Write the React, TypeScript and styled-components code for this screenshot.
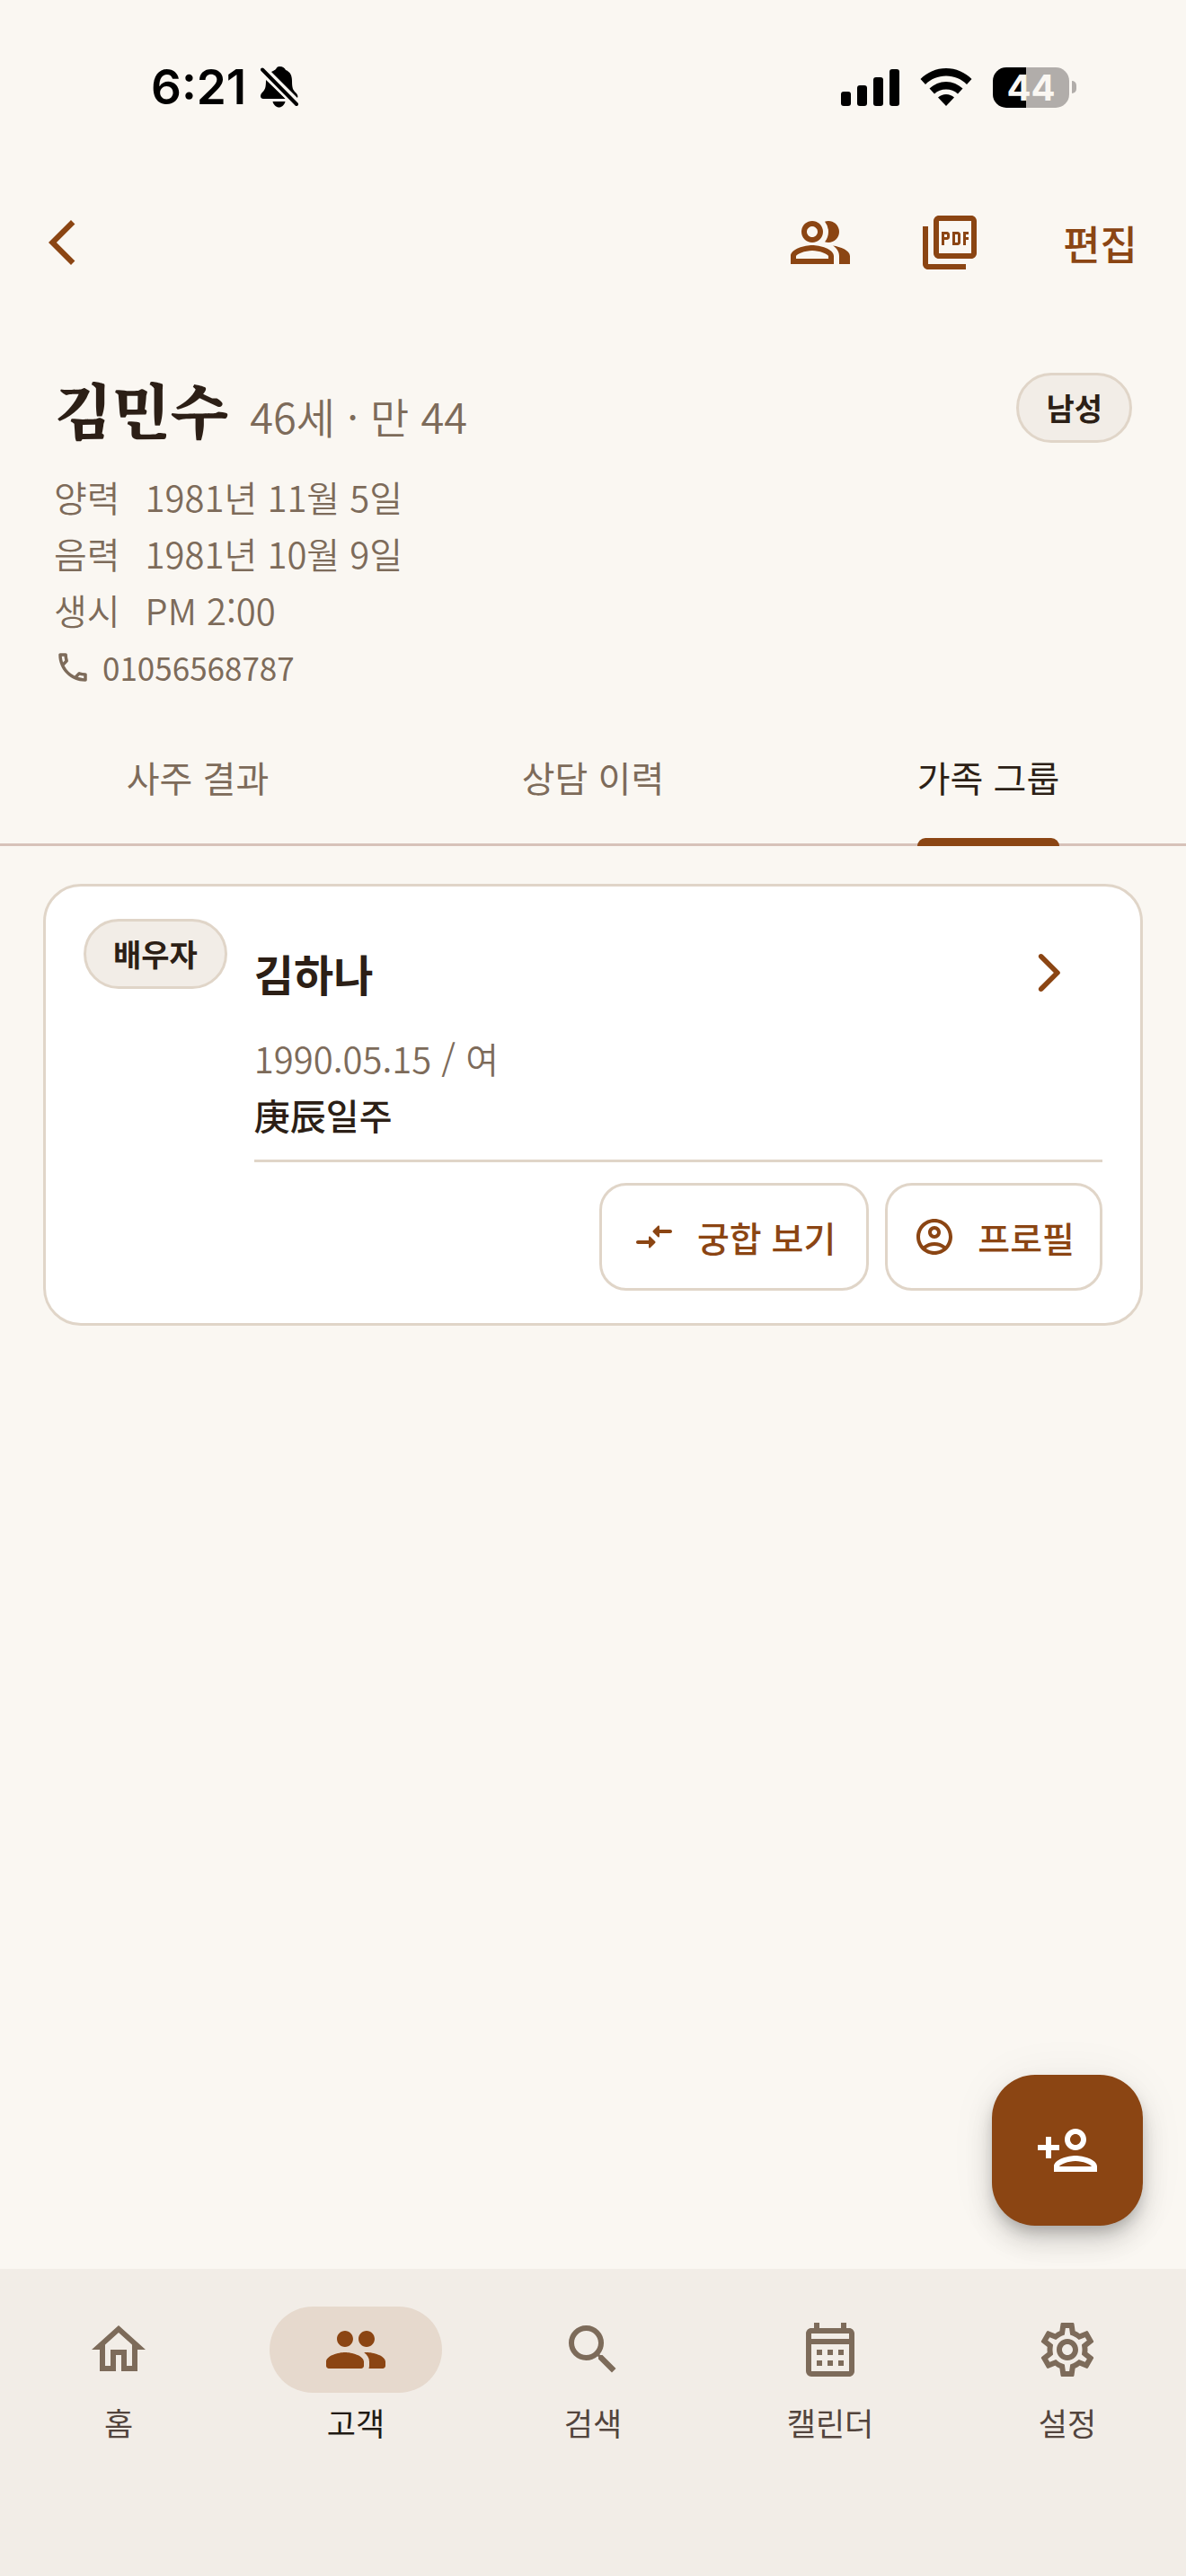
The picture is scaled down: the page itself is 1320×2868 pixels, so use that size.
import React, { useState } from 'react';
import styled, { createGlobalStyle } from 'styled-components';
import {
  MdArrowBackIosNew,
  MdOutlineAccountCircle,
  MdOutlineCalendarMonth,
  MdOutlineCall,
  MdOutlineHome,
  MdOutlinePeopleAlt,
  MdOutlinePersonAdd,
  MdOutlinePictureAsPdf,
  MdOutlineSettings,
  MdSearch,
} from 'react-icons/md';

const color = {
  page: '#faf7f2',
  surface: '#ffffff',
  soft: '#f2ede7',
  pill: '#e6d9cd',
  line: '#e0d5c8',
  tabLine: '#d7c2b9',
  brand: '#8b4513',
  ink: '#2c1f16',
  muted: '#7d6b5a',
  navText: '#52443d',
  navActive: '#211a14',
};

const sans = "'Noto Sans CJK KR', 'Noto Sans', sans-serif";

const GlobalStyle = createGlobalStyle`
  *, *::before, *::after { box-sizing: border-box; }
  body { margin: 0; background: ${color.page}; }
  button { font: inherit; color: inherit; background: none; border: 0; padding: 0; cursor: pointer; }
  h1, h2, p, dl, dt, dd { margin: 0; font-weight: inherit; font-size: inherit; }
  a { color: inherit; text-decoration: none; }
  svg { display: block; flex: none; }
`;

const Screen = styled.div`
  display: flex;
  flex-direction: column;
  min-height: 100vh;
  background: ${color.page};
  color: ${color.ink};
  font-family: ${sans};
  font-size: 40px;
  line-height: 63px;
`;

/* ---------- status bar ---------- */

const StatusBar = styled.div`
  display: flex;
  align-items: center;
  justify-content: space-between;
  height: 186px;
  padding: 8px 122px 0 168px;
  color: #000;
`;

const StatusGroup = styled.div<{ $gap: number }>`
  display: flex;
  align-items: center;
  gap: ${(p) => p.$gap}px;
`;

const Clock = styled.span`
  font-family: Inter, sans-serif;
  font-weight: 600;
  font-size: 53px;
`;

const Battery = styled.div`
  display: flex;
  align-items: center;
  gap: 3px;
`;

const BatteryBody = styled.div<{ $level: number }>`
  width: 85px;
  height: 45px;
  border-radius: 15px;
  background: linear-gradient(90deg, #000 ${(p) => p.$level}%, #b1adaa ${(p) => p.$level}%);
  color: ${color.page};
  font-family: Inter, sans-serif;
  font-weight: 700;
  font-size: 40px;
  line-height: 45px;
  text-align: center;
`;

const BatteryTip = styled.div`
  width: 5px;
  height: 14px;
  border-radius: 0 5px 5px 0;
  background: #b1adaa;
`;

const SilentBell = () => (
  <svg width="42" height="46" viewBox="0 0 42 46" aria-label="무음">
    <path
      d="M21 0c4 0 6 2 7 4 5 2 7 6 7 12 0 8 1 10 4 13 2 2 3 4 2 6L12 6c2-1 4-2 5-3 1-2 2-3 4-3z"
      fill="currentColor"
    />
    <path d="M6 15 28 36H3c-3 0-4-3-2-6 4-4 5-6 5-15z" fill="currentColor" />
    <path d="M13.500 39h14c-1 4-4 6.500-7 6.500s-6-2.500-7-6.500z" fill="currentColor" />
    <path d="M2 3.500 40 42" stroke={color.page} strokeWidth="9" />
    <path d="M2 3.500 40 42" stroke="currentColor" strokeWidth="4" strokeLinecap="round" />
  </svg>
);

const Signal = () => (
  <svg width="65" height="42" viewBox="0 0 65 42" fill="currentColor" aria-label="신호">
    <rect x="0" y="26" width="11" height="16" rx="3" />
    <rect x="18" y="19" width="11" height="23" rx="3" />
    <rect x="36" y="10" width="11" height="32" rx="3" />
    <rect x="54" y="1" width="11" height="41" rx="3" />
  </svg>
);

const Wifi = () => (
  <svg width="58" height="42" viewBox="0 0 58 42" fill="currentColor" aria-label="와이파이">
    <path d="M29 0c11 0 21 4.500 28.500 12L52 18c-6-6-14-9.500-23-9.500S12 12 6 18L.5 12C8 4.500 18 0 29 0z" />
    <path d="M29 15c7 0 13.500 3 18.500 7.500L42 28.500c-3.500-3.200-8-5-13-5s-9.500 1.800-13 5l-5.500-6C15.500 18 22 15 29 15z" />
    <path d="M29 29c3.500 0 6.500 1.200 9 3.500L29 42l-9-9.500c2.500-2.300 5.500-3.500 9-3.500z" />
  </svg>
);

/* ---------- app bar ---------- */

const AppBar = styled.header`
  display: flex;
  align-items: center;
  height: 168px;
  padding: 0 54px 0 39px;
  color: ${color.brand};
`;

const BarActions = styled.div`
  display: flex;
  align-items: center;
  gap: 72px;
  margin-left: auto;
`;

const EditButton = styled.button`
  margin-left: 18px;
  font-size: 45px;
  font-weight: 500;
`;

/* ---------- profile ---------- */

const Profile = styled.section`
  padding: 61px 60px 24px;
  color: ${color.muted};
`;

const NameRow = styled.div`
  display: flex;
  align-items: flex-start;
  justify-content: space-between;
  margin-bottom: 20px;
`;

const NameLine = styled.div`
  display: flex;
  align-items: baseline;
  gap: 24px;
  line-height: 78px;
`;

const Name = styled.h1`
  color: ${color.ink};
  font-family: 'Noto Serif CJK KR', ${sans};
  font-weight: 900;
  font-size: 67px;
`;

const Age = styled.span`
  font-size: 47px;
  font-weight: 350;
`;

const Badge = styled.span`
  flex: none;
  padding: 0 30px;
  border: 3px solid ${color.line};
  border-radius: 39px;
  background: ${color.soft};
  color: ${color.ink};
  font-size: 34px;
  font-weight: 700;
  line-height: 72px;
`;

const Facts = styled.dl`
  display: grid;
  grid-template-columns: max-content 1fr;
  column-gap: 28px;
  font-weight: 350;
`;

const Phone = styled.a`
  display: flex;
  align-items: center;
  gap: 12px;
  width: max-content;
  font-size: 35px;
`;

/* ---------- tabs ---------- */

const Tabs = styled.div`
  display: grid;
  grid-template-columns: repeat(3, 1fr);
  box-shadow: inset 0 -3px ${color.tabLine};
`;

const Tab = styled.button<{ $active: boolean }>`
  display: flex;
  justify-content: center;
  height: 144px;
  color: ${(p) => (p.$active ? color.ink : color.muted)};
`;

const TabInner = styled.span`
  display: flex;
  flex-direction: column;
  height: 100%;
`;

const TabText = styled.span`
  display: flex;
  flex: 1;
  align-items: center;
`;

const Indicator = styled.span<{ $active: boolean }>`
  height: 9px;
  border-radius: 9px 9px 0 0;
  background: ${(p) => (p.$active ? color.brand : 'transparent')};
`;

/* ---------- family card ---------- */

const Main = styled.main`
  position: relative;
  flex: 1;
  padding: 42px 48px;
`;

const Card = styled.article`
  display: flex;
  align-items: flex-start;
  gap: 30px;
  padding: 36px 42px;
  border: 3px solid ${color.line};
  border-radius: 42px;
  background: ${color.surface};
`;

const CardBody = styled.div`
  flex: 1;
`;

const CardHead = styled.div`
  display: flex;
  align-items: center;
  justify-content: space-between;
  margin-bottom: 4px;
`;

const MemberName = styled.h2`
  font-size: 48px;
  font-weight: 700;
`;

const OpenButton = styled.button`
  display: grid;
  place-items: center;
  width: 120px;
  height: 120px;
  color: ${color.brand};
`;

const Birth = styled.p`
  color: ${color.muted};
  font-weight: 350;
`;

const DayPillar = styled.p`
  font-weight: 500;
`;

const Actions = styled.div`
  display: flex;
  justify-content: flex-end;
  gap: 18px;
  margin-top: 18px;
  padding-top: 23px;
  border-top: 3px solid ${color.line};
`;

const OutlineButton = styled.button<{ $wide?: boolean }>`
  display: flex;
  align-items: center;
  gap: 24px;
  height: 120px;
  padding: 0 ${(p) => (p.$wide ? 34 : 28)}px;
  border: 3px solid ${color.line};
  border-radius: 30px;
  color: ${color.brand};
  font-size: 39px;
  font-weight: 500;
`;

const Fab = styled.button`
  position: absolute;
  right: 48px;
  bottom: 48px;
  display: grid;
  place-items: center;
  width: 168px;
  height: 168px;
  border-radius: 48px;
  background: ${color.brand};
  color: #fff;
  box-shadow:
    0 9px 15px -3px rgba(0, 0, 0, 0.2),
    0 18px 30px rgba(0, 0, 0, 0.14),
    0 3px 54px rgba(0, 0, 0, 0.06);
`;

/* ---------- bottom navigation ---------- */

const BottomNav = styled.nav`
  position: relative;
  display: grid;
  grid-template-columns: repeat(5, 1fr);
  padding: 42px 0 144px;
  background: ${color.soft};
`;

const NavItem = styled.a<{ $active: boolean }>`
  display: flex;
  flex-direction: column;
  align-items: center;
  gap: 6px;
  color: ${(p) => (p.$active ? color.navActive : color.navText)};
  font-size: 35px;
  line-height: 54px;
`;

const NavIcon = styled.span<{ $active: boolean }>`
  display: grid;
  place-items: center;
  width: 192px;
  height: 96px;
  border-radius: 48px;
  background: ${(p) => (p.$active ? color.pill : 'transparent')};
  color: ${(p) => (p.$active ? color.brand : color.muted)};
`;

const RoundIcon = ({ size, d }: { size: number; d: string }) => (
  <svg width={size} height={size} viewBox="0 0 24 24" fill="currentColor" aria-hidden="true">
    <path d={d} />
  </svg>
);

const forwardPath =
  'M7.380 21.010c.49.49 1.280.49 1.770 0l8.310-8.310c.39-.39.39-1.020 0-1.410L9.150 2.980c-.49-.49-1.280-.49-1.770 0s-.49 1.280 0 1.770L14.620 12l-7.250 7.250c-.48.48-.48 1.280.01 1.760z';
const comparePath =
  'M9.010 14H3c-.55 0-1 .45-1 1s.45 1 1 1h6.010v1.790c0 .45.54.67.85.35l2.780-2.790c.19-.2.19-.51 0-.71l-2.780-2.790c-.31-.32-.85-.09-.85.35V14zm5.980-2.210V10H21c.55 0 1-.45 1-1s-.45-1-1-1h-6.010V6.210c0-.45-.54-.67-.85-.35l-2.780 2.790c-.19.2-.19.51 0 .71l2.780 2.790c.31.31.85.09.85-.36z';
const peoplePath =
  'M16 11c1.660 0 2.990-1.340 2.990-3S17.660 5 16 5s-3 1.340-3 3 1.340 3 3 3zm-8 0c1.660 0 2.990-1.340 2.990-3S9.660 5 8 5 5 6.340 5 8s1.340 3 3 3zm0 2c-2.330 0-7 1.170-7 3.500V18c0 .55.45 1 1 1h12c.55 0 1-.45 1-1v-1.500c0-2.330-4.670-3.500-7-3.500zm8 0c-.29 0-.62.02-.97.05.02.01.03.03.04.04 1.140.83 1.930 1.940 1.930 3.410V18c0 .35-.07.69-.18 1H22c.55 0 1-.45 1-1v-1.500c0-2.330-4.670-3.500-7-3.500z';

const facts = [
  ['양력', '1981년 11월 5일'],
  ['음력', '1981년 10월 9일'],
  ['생시', 'PM 2:00'],
];

const tabs = ['사주 결과', '상담 이력', '가족 그룹'];

const navItems = [
  { label: '홈', icon: <MdOutlineHome size={72} /> },
  { label: '고객', icon: <RoundIcon size={72} d={peoplePath} /> },
  { label: '검색', icon: <MdSearch size={72} /> },
  { label: '캘린더', icon: <MdOutlineCalendarMonth size={72} /> },
  { label: '설정', icon: <MdOutlineSettings size={72} /> },
];

export default function App() {
  const [tab, setTab] = useState(2);

  return (
    <>
      <GlobalStyle />
      <Screen lang="ko">
        <StatusBar>
          <StatusGroup $gap={16}>
            <Clock>6:21</Clock>
            <SilentBell />
          </StatusGroup>
          <StatusGroup $gap={23}>
            <Signal />
            <Wifi />
            <Battery>
              <BatteryBody $level={44}>44</BatteryBody>
              <BatteryTip />
            </Battery>
          </StatusGroup>
        </StatusBar>

        <AppBar>
          <button aria-label="뒤로">
            <MdArrowBackIosNew size={60} />
          </button>
          <BarActions>
            <button aria-label="가족">
              <MdOutlinePeopleAlt size={72} />
            </button>
            <button aria-label="PDF 저장">
              <MdOutlinePictureAsPdf size={72} />
            </button>
            <EditButton>편집</EditButton>
          </BarActions>
        </AppBar>

        <Profile>
          <NameRow>
            <NameLine>
              <Name>김민수</Name>
              <Age>46세 · 만 44</Age>
            </NameLine>
            <Badge>남성</Badge>
          </NameRow>
          <Facts>
            {facts.map(([label, value]) => (
              <React.Fragment key={label}>
                <dt>{label}</dt>
                <dd>{value}</dd>
              </React.Fragment>
            ))}
          </Facts>
          <Phone href="tel:01056568787">
            <MdOutlineCall size={42} />
            01056568787
          </Phone>
        </Profile>

        <Tabs role="tablist">
          {tabs.map((label, i) => (
            <Tab
              key={label}
              role="tab"
              aria-selected={tab === i}
              $active={tab === i}
              onClick={() => setTab(i)}
            >
              <TabInner>
                <TabText>{label}</TabText>
                <Indicator $active={tab === i} />
              </TabInner>
            </Tab>
          ))}
        </Tabs>

        <Main>
          <Card>
            <Badge>배우자</Badge>
            <CardBody>
              <CardHead>
                <MemberName>김하나</MemberName>
                <OpenButton aria-label="김하나 열기">
                  <RoundIcon size={54} d={forwardPath} />
                </OpenButton>
              </CardHead>
              <Birth>1990.05.15 / 여</Birth>
              <DayPillar>庚辰일주</DayPillar>
              <Actions>
                <OutlineButton $wide>
                  <RoundIcon size={48} d={comparePath} />
                  궁합 보기
                </OutlineButton>
                <OutlineButton>
                  <MdOutlineAccountCircle size={48} />
                  프로필
                </OutlineButton>
              </Actions>
            </CardBody>
          </Card>
          <Fab aria-label="가족 추가">
            <MdOutlinePersonAdd size={72} />
          </Fab>
        </Main>

        <BottomNav>
          {navItems.map(({ label, icon }, i) => (
            <NavItem key={label} href={`#${label}`} $active={i === 1}>
              <NavIcon $active={i === 1}>{icon}</NavIcon>
              {label}
            </NavItem>
          ))}
        </BottomNav>
      </Screen>
    </>
  );
}
